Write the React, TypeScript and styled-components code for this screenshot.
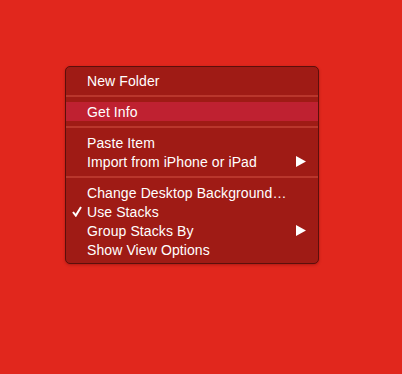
import React from 'react';
import styled, {createGlobalStyle} from 'styled-components';

const GlobalStyle = createGlobalStyle`
  html, body {
    margin: 0;
    padding: 0;
    background: #e1271d;
  }
  body {
    font-family: "Liberation Sans", Arial, sans-serif;
  }
`

type Item = { label: string; checked?: boolean; submenu?: boolean; active?: boolean }

const groups: Item[][] = [
	[{label: 'New Folder'}],
	[{label: 'Get Info', active: true}],
	[{label: 'Paste Item'}, {label: 'Import from iPhone or iPad', submenu: true}],
	[
		{label: 'Change Desktop Background…'},
		{label: 'Use Stacks', checked: true},
		{label: 'Group Stacks By', submenu: true},
		{label: 'Show View Options'},
	],
]

export default function App() {
	return (
		<Desktop>
			<GlobalStyle/>
			<Menu>
				{groups.map((group, gi) => (
					<React.Fragment key={gi}>
						{gi > 0 && <Separator/>}
						{group.map(item => (
							<Row key={item.label} $active={item.active}>
								<Check>
									{item.checked && (
										<svg width="10" height="11" viewBox="0 0 10 11">
											<path d="M1 6 L3.8 9.6 L9 1" fill="none" stroke="#fff" strokeWidth="2"/>
										</svg>
									)}
								</Check>
								<Label>{item.label}</Label>
								{item.submenu && (
									<Arrow width="10" height="11" viewBox="0 0 10 11">
										<path d="M0 0 L10 5.5 L0 11 Z" fill="#fff"/>
									</Arrow>
								)}
							</Row>
						))}
					</React.Fragment>
				))}
			</Menu>
		</Desktop>
	);
}

const Desktop = styled.div`
  width: 402px;
  height: 374px;
  padding: 66px 0 0 65px;
  box-sizing: border-box;
`
const Menu = styled.div`
  width: 254px;
  box-sizing: border-box;
  padding: 4px 0;
  background: #9f1b15;
  border: 1px solid #5c0f0b;
  border-radius: 5px;
  box-shadow: 0 1px 3px rgba(80, 0, 0, 0.35);
`
const Row = styled.div<{ $active?: boolean }>`
  display: flex;
  align-items: center;
  height: 19px;
  padding: 0 12px 0 6px;
  background: ${p => p.$active ? '#bf2131' : 'transparent'};
  color: #fff;
  font-size: 14px;
  letter-spacing: 0.1px;
`
const Check = styled.span`
  display: flex;
  align-items: center;
  width: 15px;
`
const Label = styled.span`
  flex: 1;
  white-space: nowrap;
`
const Arrow = styled.svg`
  display: block;
`
const Separator = styled.div`
  height: 2px;
  margin: 5px 0;
  background: #b9362c;
`
